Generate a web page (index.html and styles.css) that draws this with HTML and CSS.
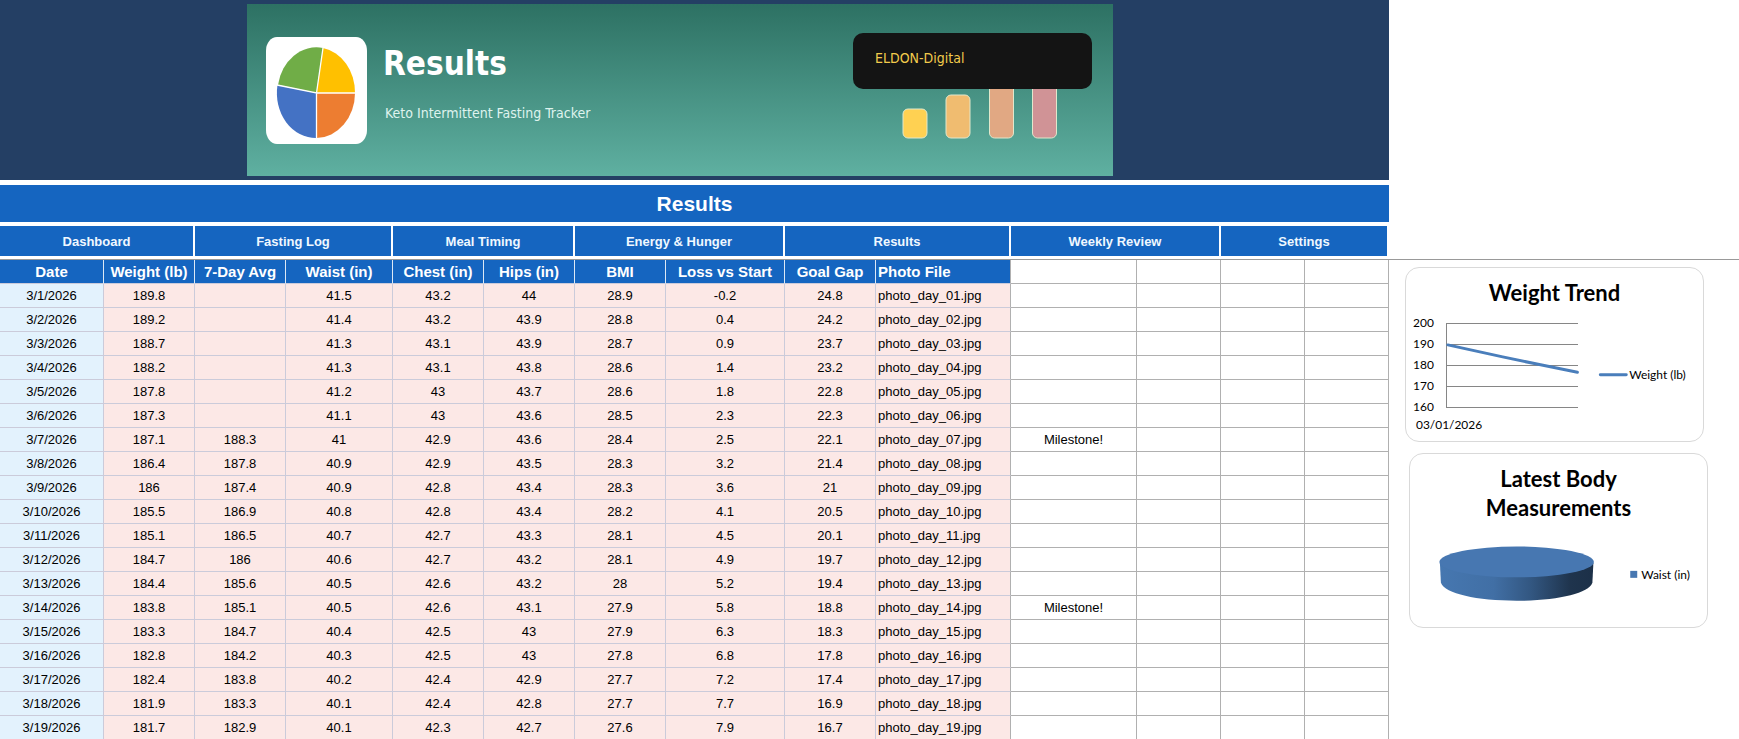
FILE: index.html
```html
<!DOCTYPE html>
<html lang="en">
<head>
    <meta charset="utf-8">
    <title>Results - Keto Intermittent Fasting Tracker</title>
    <link rel="stylesheet" href="styles.css">
</head>
<body>
    <div class="top">
        <header class="masthead">
            <div class="banner">
                <svg class="banner-logo" viewBox="0 0 101 107">
                    <rect width="101" height="107" rx="11" ry="14" fill="#fff"/>
                    <path d="M50.5 56L57 11A39 45 0 0 1 89 56Z" fill="#ffc000"/>
                    <path d="M50.5 56H89A39 45 0 0 1 50.5 101Z" fill="#ed7d31"/>
                    <path d="M50.5 56V101A39 45 0 0 1 11.5 48Z" fill="#4472c4"/>
                    <path d="M50.5 56L12 48A39 45 0 0 1 57 11Z" fill="#70ad47"/>
                    <path d="M50.5 101V56H90M57 11L50.5 56L11 48" fill="none" stroke="#fff" stroke-width="1.3"/>
                </svg>
                <div class="banner-text">
                    <h1>Results</h1>
                    <p>Keto Intermittent Fasting Tracker</p>
                </div>
                <div class="banner-brand">
                    <div class="brand">ELDON-Digital</div>
                    <svg class="brand-bars" viewBox="0 0 240 50">
                        <g stroke="#e0e8cc">
                            <rect x="50" y="20" width="24" height="29" rx="5" fill="#ffd152"/>
                            <rect x="93" y="6" width="24" height="43" rx="5" fill="#f0bc70"/>
                            <rect x="136.500" y="-12" width="24" height="61" rx="5" fill="#e1a883"/>
                            <rect x="179.500" y="-12" width="24" height="61" rx="5" fill="#d09396"/>
                        </g>
                    </svg>
                </div>
            </div>
        </header>
        <h2 class="sheet-title">Results</h2>
        <nav class="tabs">
            <a href="#dashboard">Dashboard</a>
            <a href="#fasting">Fasting Log</a>
            <a href="#meals">Meal Timing</a>
            <a href="#energy">Energy &amp; Hunger</a>
            <a href="#results">Results</a>
            <a href="#weekly">Weekly Review</a>
            <a href="#settings">Settings</a>
        </nav>
    </div>

    <main class="content">
        <table class="sheet">
            <colgroup>
                <col class="c-date"><col class="c-num"><col class="c-num"><col class="c-waist">
                <col class="c-num"><col class="c-num"><col class="c-num"><col class="c-loss">
                <col class="c-num"><col class="c-photo"><col class="c-note">
                <col class="c-blank"><col class="c-blank"><col class="c-blank">
            </colgroup>
            <thead>
                <tr>
                    <th>Date</th><th>Weight (lb)</th><th>7-Day Avg</th><th>Waist (in)</th>
                    <th>Chest (in)</th><th>Hips (in)</th><th>BMI</th><th>Loss vs Start</th>
                    <th>Goal Gap</th><th class="photo">Photo File</th>
                    <td></td><td></td><td></td><td></td>
                </tr>
            </thead>
            <tbody id="rows"></tbody>
        </table>

        <aside class="charts">
            <section class="card">
                <h3>Weight Trend</h3>
                <svg class="chart" viewBox="0 0 298 124">
                    <g stroke="#868686" shape-rendering="crispEdges">
                        <path d="M40 6.500H173M40 27.500H173M40 48.500H173M40 69.500H173M40 90.500H173M40.500 6V91" fill="none"/>
                    </g>
                    <path d="M42 28L58 31.500L97 40L135 48L172 55.500" fill="none" stroke="#4a7ebb" stroke-width="3" stroke-linecap="round" stroke-linejoin="round"/>
                    <path d="M195 58H221" stroke="#4a7ebb" stroke-width="3" stroke-linecap="round"/>
                    <g class="axis">
                        <text x="28" y="10">200</text>
                        <text x="28" y="31">190</text>
                        <text x="28" y="52">180</text>
                        <text x="28" y="73">170</text>
                        <text x="28" y="94">160</text>
                    </g>
                    <text x="10" y="112">03/01/2026</text>
                    <text x="224" y="62">Weight (lb)</text>
                </svg>
            </section>
            <section class="card card-pie">
                <h3>Latest Body<br>Measurements</h3>
                <svg class="chart" viewBox="0 0 298 95">
                    <defs>
                        <linearGradient id="side">
                            <stop offset="0" stop-color="#4677b0"/>
                            <stop offset="0.350" stop-color="#416fa5"/>
                            <stop offset="0.600" stop-color="#325680"/>
                            <stop offset="0.850" stop-color="#1f344d"/>
                            <stop offset="1" stop-color="#1c3048"/>
                        </linearGradient>
                    </defs>
                    <path d="M30 31L31 51C35 62 67 69 107 69C147 69 179 62 183 51L184 31Z" fill="url(#side)"/>
                    <ellipse cx="107" cy="30" rx="77.500" ry="15.500" fill="#4777b1"/>
                    <rect x="221" y="39" width="7" height="7" fill="#4777b1"/>
                    <text x="232" y="47">Waist (in)</text>
                </svg>
            </section>
        </aside>
    </main>

    <script src="script.js"></script>
</body>
</html>
```
FILE: styles.css
```css
* { box-sizing: border-box; }
body {
    margin: 0;
    height: 100vh;
    overflow: hidden;
    background: #fff;
    color: #000;
    font-family: "Liberation Sans", Arial, sans-serif;
    font-size: 13px;
}
h1, h2, h3, p { margin: 0; }

/* both blocks share the same split: sheet | chart area */
.top, .content {
    display: grid;
    grid-template-columns: minmax(0, 1389fr) minmax(0, 350fr);
}
.top { padding-bottom: 3px; }
.top > * { grid-column: 1; }

.masthead {
    padding: 4px 0 4px 247px;
    background: #243f64;
}
.banner {
    display: flex;
    align-items: flex-start;
    max-width: 866px;
    height: 172px;
    padding-left: 19px;
    padding-right: 21px;
    background: linear-gradient(#2d7163, #5fb0a1);
    font-family: "DejaVu Sans Condensed", "DejaVu Sans", sans-serif;
}
.banner-logo { width: 101px; height: 107px; margin-top: 33px; }
.banner-text { flex: 1; padding: 33px 0 0 16px; }
.banner-text h1 { color: #fff; font-size: 33px; line-height: 54px; }
.banner-text p { padding: 10px 0 0 2px; color: #dff3ee; font-size: 14px; line-height: 24px; }
.banner-brand { width: 239px; padding-top: 29px; }
.brand {
    height: 56px;
    padding-left: 22px;
    border-radius: 10px;
    background: #141414;
    color: #f2cb4c;
    font-size: 14px;
    line-height: 50px;
}
.brand-bars { display: block; width: 240px; height: 50px; }

.sheet-title {
    margin: 5px 0 4px;
    background: #1565c0;
    color: #fff;
    font-size: 21px;
    line-height: 37px;
    text-align: center;
}
.tabs {
    display: grid;
    grid-template-columns: 195fr 198fr 182fr 210fr 226fr 210fr 168fr;
}
.tabs a {
    padding-top: 2px;
    border-right: 2px solid #fff;
    background: #1565c0;
    color: #f0f8ff;
    font-weight: bold;
    line-height: 28px;
    text-align: center;
    text-decoration: none;
}

.content { align-items: start; border-top: 1px solid #999; }

.sheet {
    width: 100%;
    table-layout: fixed;
    border-collapse: separate;
    border-spacing: 0;
}
.c-date { width: 104px; }
.c-num { width: 91px; }
.c-waist { width: 107px; }
.c-loss { width: 119px; }
.c-photo { width: 135px; }
.c-note { width: 126px; }
.c-blank { width: 84px; }

.sheet th, .sheet td {
    height: 24px;
    padding: 0;
    border-right: 1px solid #b0b0b0;
    border-bottom: 1px solid #b0b0b0;
    line-height: 23px;
    text-align: center;
    white-space: nowrap;
}
.sheet th {
    border-right-color: #dce8f5;
    border-bottom-color: #cbcbda;
    background: #1565c0;
    color: #fff;
    font-size: 15px;
}
.sheet .date, .sheet .value {
    border-color: #cbcbda;
    background: #fce8e6;
}
.sheet .date { background: #e3f2fd; }
.sheet .photo { padding-left: 2px; border-right-color: #b0b0b0; text-align: left; }

.charts { padding: 7px 0 0 16px; font-family: Lato, sans-serif; }
.card {
    max-width: 299px;
    height: 175px;
    border: 1px solid #d9d9d9;
    border-radius: 14px;
    background: #fff;
}
.card-pie { margin: 11px 0 0 4px; }
.card h3 {
    padding-top: 10px;
    font-size: 22px;
    line-height: 29px;
    text-align: center;
}
.card:first-child h3 { padding-bottom: 10px; }
.chart { display: block; width: 100%; font-size: 12px; }
.card-pie .chart { margin-top: 10px; }
.axis { text-anchor: end; }
```
FILE: script.js
```js
// date, weight, 7-day avg, waist, chest, hips, bmi, loss, goal gap
const rows = [
    ['3/1/2026', '189.8', '', '41.5', '43.2', '44', '28.9', '-0.2', '24.8'],
    ['3/2/2026', '189.2', '', '41.4', '43.2', '43.9', '28.8', '0.4', '24.2'],
    ['3/3/2026', '188.7', '', '41.3', '43.1', '43.9', '28.7', '0.9', '23.7'],
    ['3/4/2026', '188.2', '', '41.3', '43.1', '43.8', '28.6', '1.4', '23.2'],
    ['3/5/2026', '187.8', '', '41.2', '43', '43.7', '28.6', '1.8', '22.8'],
    ['3/6/2026', '187.3', '', '41.1', '43', '43.6', '28.5', '2.3', '22.3'],
    ['3/7/2026', '187.1', '188.3', '41', '42.9', '43.6', '28.4', '2.5', '22.1'],
    ['3/8/2026', '186.4', '187.8', '40.9', '42.9', '43.5', '28.3', '3.2', '21.4'],
    ['3/9/2026', '186', '187.4', '40.9', '42.8', '43.4', '28.3', '3.6', '21'],
    ['3/10/2026', '185.5', '186.9', '40.8', '42.8', '43.4', '28.2', '4.1', '20.5'],
    ['3/11/2026', '185.1', '186.5', '40.7', '42.7', '43.3', '28.1', '4.5', '20.1'],
    ['3/12/2026', '184.7', '186', '40.6', '42.7', '43.2', '28.1', '4.9', '19.7'],
    ['3/13/2026', '184.4', '185.6', '40.5', '42.6', '43.2', '28', '5.2', '19.4'],
    ['3/14/2026', '183.8', '185.1', '40.5', '42.6', '43.1', '27.9', '5.8', '18.8'],
    ['3/15/2026', '183.3', '184.7', '40.4', '42.5', '43', '27.9', '6.3', '18.3'],
    ['3/16/2026', '182.8', '184.2', '40.3', '42.5', '43', '27.8', '6.8', '17.8'],
    ['3/17/2026', '182.4', '183.8', '40.2', '42.4', '42.9', '27.7', '7.2', '17.4'],
    ['3/18/2026', '181.9', '183.3', '40.1', '42.4', '42.8', '27.7', '7.7', '16.9'],
    ['3/19/2026', '181.7', '182.9', '40.1', '42.3', '42.7', '27.6', '7.9', '16.7']
];

document.getElementById('rows').innerHTML = rows.map(function(row, i) {
    const day = i + 1;
    const cells = row.map((v, c) => `<td class="${c === 0 ? 'date' : 'value'}">${v}</td>`).join('');
    const photo = `photo_day_${String(day).padStart(2, '0')}.jpg`;
    const note = day % 7 === 0 ? 'Milestone!' : '';
    return `<tr>${cells}<td class="value photo">${photo}</td><td>${note}</td><td></td><td></td><td></td></tr>`;
}).join('');
```
